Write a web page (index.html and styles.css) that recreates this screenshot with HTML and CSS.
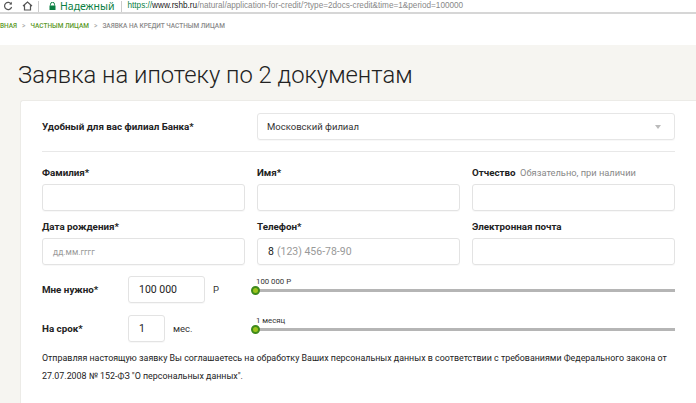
FILE: index.html
```html
<!DOCTYPE html>
<html>
	<head>
		<meta charset="UTF-8">
		<title>Заявка на ипотеку по 2 документам</title>
		<link rel="stylesheet" href="styles.css">
	</head>
	<body>
		<div class="browserbar">
			<span class="ico reload">
				<svg width="10" height="10" viewBox="0 0 10 10"><path d="M8.3 3.2A3.6 3.6 0 1 0 8.6 6" fill="none" stroke="#555" stroke-width="1.2"/><path d="M6.2 3.4h2.6V0.8z" fill="#555"/></svg>
			</span>
			<span class="ico home">
				<svg width="11" height="10" viewBox="0 0 11 10"><path d="M1 5L5.5 1 10 5M2.5 4v5h6V4" fill="none" stroke="#555" stroke-width="1.2"/></svg>
			</span>
			<span class="sep"></span>
			<span class="lock">
				<svg width="7" height="8" viewBox="0 0 7 8"><path d="M1.5 3.5V2.3a2 2 0 0 1 4 0v1.2" fill="none" stroke="#0b8043" stroke-width="1"/><rect x="0.5" y="3.5" width="6" height="4.5" fill="#0b8043"/></svg>
			</span>
			<span class="secure">Надежный</span>
			<span class="sep"></span>
			<span class="url"><span class="scheme">https://</span><span class="host">www.rshb.ru</span>/natural/application-for-credit/?type=2docs-credit&amp;time=1&amp;period=100000</span>
		</div>

		<div class="crumbs">
			<a href="#">ВНАЯ</a><span class="arr">&gt;</span><a href="#">ЧАСТНЫМ ЛИЦАМ</a><span class="arr">&gt;</span><span class="here">ЗАЯВКА НА КРЕДИТ ЧАСТНЫМ ЛИЦАМ</span>
		</div>

		<div class="page">
			<h1>Заявка на ипотеку по 2 документам</h1>

			<form class="card">
				<div class="grid">
					<label class="lbl branch">Удобный для вас филиал Банка*</label>
					<div class="select">
						<span>Московский филиал</span>
						<span class="caret"></span>
					</div>
				</div>

				<div class="line"></div>

				<div class="grid fields">
					<div class="field">
						<label class="lbl">Фамилия*</label>
						<div class="input"></div>
					</div>
					<div class="field">
						<label class="lbl">Имя*</label>
						<div class="input"></div>
					</div>
					<div class="field">
						<label class="lbl">Отчество <span class="hint">Обязательно, при наличии</span></label>
						<div class="input"></div>
					</div>
					<div class="field">
						<label class="lbl">Дата рождения*</label>
						<div class="input"><span class="ph small">дд.мм.гггг</span></div>
					</div>
					<div class="field">
						<label class="lbl">Телефон*</label>
						<div class="input"><span class="val">8</span> <span class="ph">(123) 456-78-90</span></div>
					</div>
					<div class="field">
						<label class="lbl">Электронная почта</label>
						<div class="input"></div>
					</div>
				</div>

				<div class="range-row">
					<label class="lbl rlbl">Мне нужно*</label>
					<div class="input sum"><span class="val">100 000</span></div>
					<span class="unit">Р</span>
					<div class="range">
						<span class="rcap">100 000 Р</span>
						<div class="track"><span class="thumb"></span></div>
					</div>
				</div>

				<div class="range-row">
					<label class="lbl rlbl">На срок*</label>
					<div class="input term"><span class="val">1</span></div>
					<span class="unit">мес.</span>
					<div class="range">
						<span class="rcap">1 месяц</span>
						<div class="track"><span class="thumb"></span></div>
					</div>
				</div>

				<p class="note">Отправляя настоящую заявку Вы соглашаетесь на обработку Ваших персональных данных в соответствии с требованиями Федерального закона от 27.07.2008 № 152-ФЗ "О персональных данных".</p>
			</form>
		</div>
	</body>
</html>
```

FILE: styles.css
```css
html,body{margin:0;padding:0;}
body{width:696px;height:403px;overflow:hidden;background:#fff;font-family:Roboto,"Noto Sans",sans-serif;color:#222;}

/* адресная строка */
.browserbar{height:12px;border-bottom:2px solid #d6d6d6;display:flex;align-items:center;font-family:"Noto Sans",sans-serif;font-size:10.5px;line-height:12px;padding-left:3px;overflow:hidden;white-space:nowrap;}
.browserbar .ico{display:inline-flex;margin-right:9px;}
.browserbar .home{margin-right:5px;}
.browserbar .sep{width:1px;height:11px;background:#ccc;margin:0 6px 0 0;}
.browserbar .lock{display:inline-flex;margin:0 4px 0 4px;}
.browserbar .secure{color:#0b8043;margin-right:6px;}
.browserbar .url{color:#888;font-family:"Liberation Sans",sans-serif;font-size:8.2px;}
.browserbar .scheme{color:#0b8043;}
.browserbar .host{color:#222;}

/* хлебные крошки */
.crumbs{height:31px;padding-top:1px;box-sizing:border-box;font-size:6.5px;font-weight:500;line-height:22px;white-space:nowrap;}
.crumbs a{color:#5c9a2a;text-decoration:none;}
.crumbs .arr{color:#aaa;margin:0 5px;}
.crumbs .here{color:#8a8a8a;}

.page{background:#f6f5f1;padding:14px 0 0 20px;height:400px;}
.page h1{margin:0 0 9px -2px;font-size:23.8px;line-height:32px;font-weight:300;color:#222;}

.card{display:block;background:#fff;border:1px solid #ecebe7;border-right:0;border-radius:3px 0 0 3px;padding:12px 21px 20px 21px;}

.grid{display:grid;grid-template-columns:203px 203px 203px;column-gap:12px;}
.lbl{display:block;font-size:9.8px;font-weight:700;line-height:14px;color:#222;}
.branch{align-self:center;}
.hint{font-weight:400;color:#888;font-size:9.3px;margin-left:2px;}

.select{grid-column:2 / 4;height:25px;border:1px solid #e6e6e6;border-radius:3px;display:flex;align-items:center;justify-content:space-between;padding:0 13px 0 9px;font-size:9.5px;color:#333;box-shadow:0 1px 1px rgba(0,0,0,.03);}
.select .caret{width:0;height:0;border-left:3px solid transparent;border-right:3px solid transparent;border-top:4px solid #bbb;}

.line{height:1px;background:#e8e8e8;margin:11px 0 14px 0;}

.fields{row-gap:9px;}
.field .lbl{margin-bottom:4px;}
.input{height:25px;border:1px solid #e3e3e3;border-radius:3px;display:flex;align-items:center;padding:0 10px;font-size:10.5px;box-shadow:0 1px 1px rgba(0,0,0,.03);}
.input .ph{color:#999;margin-left:3px;}
.input .ph.small{font-size:8.5px;margin-left:0;}
.input .val{color:#222;}

.range-row{display:flex;align-items:center;margin-top:11px;}
.range-row + .range-row{margin-top:12px;}
.rlbl{width:86px;}
.input.sum{width:55px;}
.input.term{width:15px;}
.unit{font-size:9.5px;margin-left:8px;color:#333;}
.range{margin-left:auto;width:423px;position:relative;padding-top:1px;}
.rcap{position:absolute;left:4px;top:-11px;font-size:7.8px;line-height:9px;color:#333;}
.track{height:3px;background:#b5b5b5;position:relative;}
.thumb{position:absolute;left:-1px;top:-3px;width:5px;height:5px;border-radius:50%;background:#9bc41c;border:2px solid #3f8a1b;}

.note{margin:7px -10px 0 0;font-size:8.9px;line-height:18px;color:#222;}
```
